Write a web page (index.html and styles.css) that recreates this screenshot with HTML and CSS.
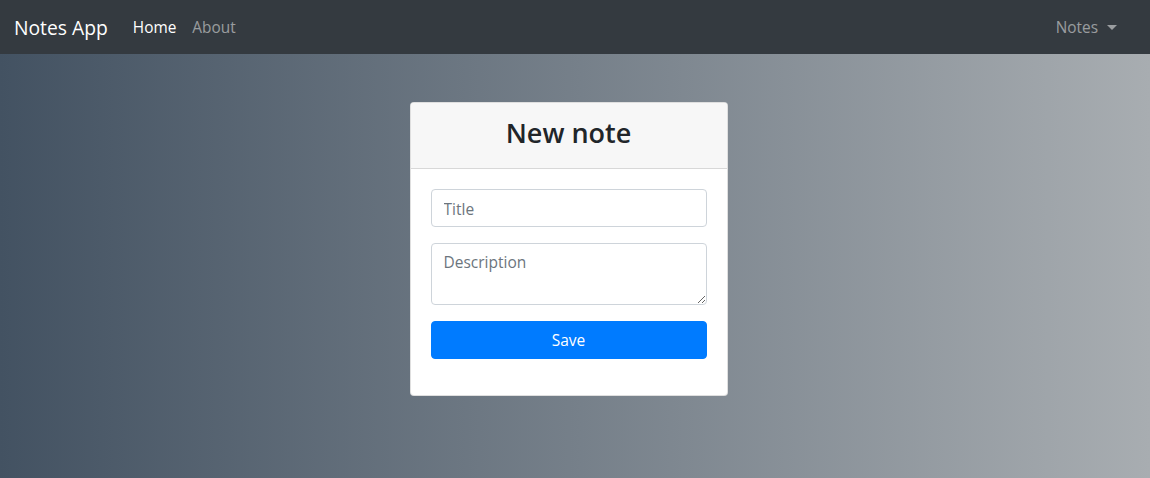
FILE: index.html
```html
<!DOCTYPE html>
<html>
<head>
<meta charset="utf-8">
<link rel="stylesheet" href="styles.css">
</head>
<body>
<nav class="navbar">
  <a class="brand" href="#">Notes App</a>
  <ul class="nav">
    <li><a class="nav-link active" href="#">Home</a></li>
    <li><a class="nav-link" href="#">About</a></li>
  </ul>
  <div class="nav-right">
    <a class="nav-link dropdown" href="#">Notes<span class="caret"></span></a>
  </div>
</nav>
<main class="page">
  <div class="card">
    <div class="card-header"><h2>New note</h2></div>
    <form class="card-body">
      <input class="control" type="text" placeholder="Title">
      <textarea class="control area" placeholder="Description"></textarea>
      <button class="btn" type="button">Save</button>
    </form>
  </div>
</main>
</body>
</html>
```
FILE: styles.css
```css
* { box-sizing: border-box; }
html, body { margin: 0; height: 100%; }
body {
  font-family: "Open Sans", "Noto Sans", sans-serif;
  font-size: 16px;
  color: #212529;
  display: flex;
  flex-direction: column;
}
.navbar {
  height: 54px;
  background: #343a40;
  display: flex;
  align-items: center;
  padding: 0 16px 0 14px;
}
.brand {
  color: #fff;
  font-size: 19.3px;
  text-decoration: none;
  margin-right: 17px;
}
.nav { list-style: none; margin: 0; padding: 0; display: flex; }
.nav-link {
  display: block;
  padding: 8px 8px;
  color: rgba(255,255,255,.5);
  text-decoration: none;
  font-size: 15.4px;
}
.nav-link.active { color: #fff; }
.nav-right { margin-left: auto; margin-right: 9px; }
.dropdown { display: flex; align-items: center; }
.caret {
  display: inline-block;
  margin-left: 9px;
  border-top: 5px solid rgba(255,255,255,.5);
  border-left: 5px solid transparent;
  border-right: 5px solid transparent;
}
.page {
  flex: 1;
  background: linear-gradient(to right, #435262, #a8adb1);
  display: flex;
  justify-content: center;
  align-items: flex-start;
  padding-top: 48px;
}
.card {
  width: 318px;
  background: #fff;
  border: 1px solid rgba(0,0,0,.125);
  border-radius: 4px;
  margin-right: 13px;
}
.card-header {
  background: #f7f7f7;
  border-bottom: 1px solid rgba(0,0,0,.125);
  height: 66px;
  display: flex;
  align-items: center;
  justify-content: center;
  border-radius: 3px 3px 0 0;
}
.card-header h2 {
  margin: 0;
  font-size: 27px;
  font-weight: 600;
  color: #212529;
  padding-bottom: 6px;
}
.card-body {
  padding: 20px 20px 36px;
  display: flex;
  flex-direction: column;
  gap: 16px;
  margin: 0;
}
.control {
  display: block;
  width: 100%;
  height: 38px;
  padding: 7px 12px 5px;
  font: inherit;
  font-size: 15.5px;
  color: #495057;
  border: 1px solid #ced4da;
  border-radius: 4px;
  background: #fff;
}
.control::placeholder { color: #6c757d; }
.area { height: 62px; resize: vertical; }
.btn {
  height: 38px;
  border: 1px solid #007bff;
  background: #007bff;
  color: #fff;
  font: inherit;
  font-size: 15.5px;
  border-radius: 4px;
}
```
